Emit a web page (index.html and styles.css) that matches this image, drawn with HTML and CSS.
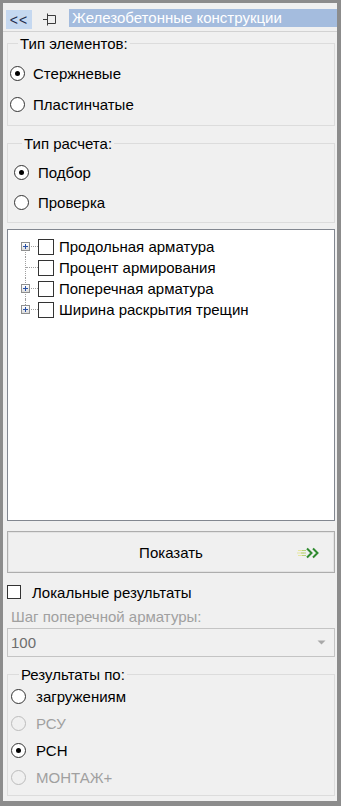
FILE: index.html
```html
<!DOCTYPE html>
<html lang="ru">
<head>
  <meta charset="UTF-8">
  <meta name="viewport" content="width=device-width, initial-scale=1.0">
  <title>Железобетонные конструкции</title>
  <link rel="stylesheet" href="styles.css">
</head>
<body>
  <div class="panel">
    <div class="header">
      <button class="collapse" type="button">&lt;&lt;</button>
      <span class="pin">
        <svg width="16" height="14" viewBox="0 0 16 14">
          <path d="M1 7.5H5.5M5.5 1.5V13.5M5.5 3.5H13.5V11.5H5.5" fill="none" stroke="#3c3c3c" stroke-width="1"/>
        </svg>
      </span>
      <div class="title">Железобетонные конструкции</div>
    </div>

    <div class="content">
      <fieldset class="group group-elem">
        <legend>Тип элементов:</legend>
        <label class="radio"><span class="circle checked"></span>Стержневые</label>
        <label class="radio"><span class="circle"></span>Пластинчатые</label>
      </fieldset>

      <fieldset class="group group-calc">
        <legend>Тип расчета:</legend>
        <label class="radio"><span class="circle checked"></span>Подбор</label>
        <label class="radio"><span class="circle"></span>Проверка</label>
      </fieldset>

      <div class="tree">
        <div class="node first">
          <span class="branch"><span class="plus"></span></span>
          <span class="box"></span>Продольная арматура
        </div>
        <div class="node">
          <span class="branch"></span>
          <span class="box"></span>Процент армирования
        </div>
        <div class="node">
          <span class="branch"><span class="plus"></span></span>
          <span class="box"></span>Поперечная арматура
        </div>
        <div class="node last">
          <span class="branch"><span class="plus"></span></span>
          <span class="box"></span>Ширина раскрытия трещин
        </div>
      </div>

      <button class="show" type="button">
        Показать
        <svg class="go" width="26" height="14" viewBox="0 0 26 14">
          <path d="M1 4.5H7M0 7H7M1 9.5H7" stroke="#e6e6a0" stroke-width="1.2"/>
          <path d="M5 4.5H9M4 7H9M5 9.5H9" stroke="#b8d27a" stroke-width="1.2"/>
          <path d="M10 2.5L14.5 7L10 11.5M16 2.5L20.5 7L16 11.5" fill="none" stroke="#2f8a2f" stroke-width="2"/>
        </svg>
      </button>

      <label class="check"><span class="box small"></span>Локальные результаты</label>

      <div class="step-label">Шаг поперечной арматуры:</div>
      <div class="combo">
        <span>100</span>
        <svg width="9" height="5" viewBox="0 0 9 5"><path d="M0.5 0.5H8.5L4.5 4.5Z" fill="#a8a8a8"/></svg>
      </div>

      <fieldset class="group group-res">
        <legend>Результаты по:</legend>
        <label class="radio"><span class="circle"></span>загружениям</label>
        <label class="radio disabled"><span class="circle"></span>РСУ</label>
        <label class="radio"><span class="circle checked"></span>РСН</label>
        <label class="radio disabled"><span class="circle"></span>МОНТАЖ+</label>
      </fieldset>
    </div>
  </div>
</body>
</html>
```

FILE: styles.css
```css
body { margin: 0; font-family: "Liberation Sans", Arial, sans-serif; font-size: 15px; color: #000; }

.panel {
  width: 341px; height: 806px; box-sizing: border-box;
  border-style: solid; border-color: #8c8c8c;
  border-width: 3px 4px 5px 3px;
  background: #f0f0f0; overflow: hidden;
  display: flex; flex-direction: column;
}

.header {
  height: 28px; border-bottom: 1px solid #d2d2d2;
  display: flex; align-items: center; padding-left: 3px;
}
.collapse {
  width: 26px; height: 19px; margin-top: 5px; padding: 0;
  background: #c5d8f0; border: none; color: #1f2d4d;
  font-family: "Liberation Sans", Arial, sans-serif; font-size: 14px; letter-spacing: 1px;
}
.pin { width: 16px; height: 14px; margin-left: 10px; margin-top: 4px; }
.pin svg { display: block; }
.title {
  flex: 1; height: 18px; margin-left: 11px; margin-top: 2px;
  background: #a4bcde; color: #fff; line-height: 18px; padding-left: 3px;
  white-space: nowrap;
}

.content { display: flex; flex-direction: column; padding: 0 2px 0 4px; }

.group {
  margin: 0; border: 1px solid #dcdcdc; padding: 0;
  display: flex; flex-direction: column;
}
.group legend { padding: 0 2px; margin-left: 8px; line-height: 17px; }

.group-elem { margin-top: 3px; padding: 6px 0 5px 2px; }
.group-elem .radio { height: 31px; }
.group-calc { margin-top: 9px; padding: 5px 0 5px 6px; }
.group-calc .radio { height: 30px; }
.group-calc .circle { margin-right: 9px; }
.group-res { margin-top: 9px; padding: 0 0 4px 3px; }
.group-res .radio { height: 27px; }
.group-res .circle { margin-right: 10px; }

.radio { display: flex; align-items: center; }
.circle {
  width: 13px; height: 13px; border: 1px solid #333; border-radius: 50%;
  background: #fff; margin-right: 8px; box-sizing: content-box;
  display: flex; align-items: center; justify-content: center;
}
.circle.checked::after {
  content: ""; width: 5px; height: 5px; border-radius: 50%; background: #000;
}
.radio.disabled { color: #a0a0a0; }
.radio.disabled .circle { border-color: #bcbcbc; background: #f0f0f0; }

.tree {
  margin-top: 6px; height: 292px; box-sizing: border-box;
  border: 1px solid #828790; background: #fff; padding-top: 6px;
}
.node { height: 21px; display: flex; align-items: center; }
.branch {
  position: relative; width: 17px; height: 21px; margin-left: 13px;
  display: flex; align-items: center;
}
.branch::before {
  content: ""; position: absolute; left: 4px; top: 0; bottom: 0;
  border-left: 1px dotted #a0a0a0;
}
.node.first .branch::before { top: 10px; }
.node.last .branch::before { bottom: 11px; }
.branch::after {
  content: ""; position: absolute; left: 5px; right: 0; top: 10px;
  border-top: 1px dotted #a0a0a0;
}
.plus {
  position: relative; z-index: 1; width: 7px; height: 7px;
  border: 1px solid #8e8f8f; background: linear-gradient(#fff, #dcdcdc);
}
.plus::before {
  content: ""; position: absolute; left: 1px; top: 3px; width: 5px; height: 1px; background: #2a52a6;
}
.plus::after {
  content: ""; position: absolute; left: 3px; top: 1px; width: 1px; height: 5px; background: #2a52a6;
}
.box {
  width: 14px; height: 14px; border: 1px solid #333; background: #fff;
  margin-right: 5px; box-sizing: content-box;
}
.box.small { width: 12px; height: 12px; margin-right: 11px; }

.show {
  margin-top: 10px; height: 42px; position: relative;
  border: 1px solid #adadad; box-shadow: inset 0 0 0 1px #e3e3e3;
  background: #f0f0f0; font-family: inherit; font-size: 15px; color: #000;
}
.go { position: absolute; right: 11px; top: 14px; }

.check { display: flex; align-items: center; height: 20px; margin-top: 9px; }

.step-label { margin-top: 6px; height: 18px; line-height: 18px; color: #a0a0a0; padding-left: 4px; }

.combo {
  margin-top: 2px; height: 29px; box-sizing: border-box;
  border: 1px solid #c4c4c4; background: #f0f0f0;
  display: flex; align-items: center; justify-content: space-between;
  padding: 0 8px 0 3px; color: #6d6d6d;
}
.combo svg { display: block; }
```
